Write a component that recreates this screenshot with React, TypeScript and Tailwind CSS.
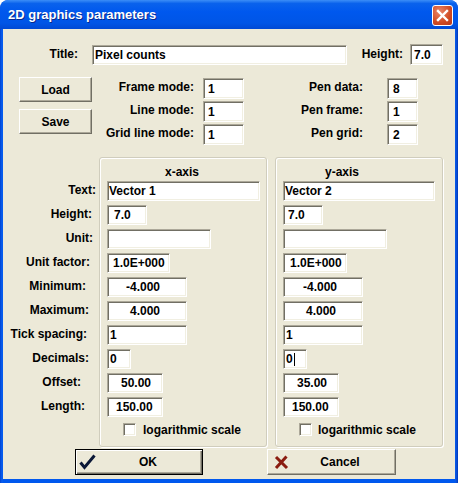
import React from "react";

const inputCls =
  "bg-white border border-t-[#aca899] border-l-[#aca899] border-b-white border-r-white shadow-[inset_1px_1px_0_#716f64,inset_-1px_-1px_0_#f1efe2] flex items-center whitespace-nowrap overflow-hidden";

function Field({ cls, text, cursor }: { cls: string; text: string; cursor?: boolean }) {
  return (
    <div className={inputCls + " " + cls}>
      <span>{text}</span>
      {cursor && <span className="inline-block w-[1px] h-[13px] bg-black ml-[1px]" />}
    </div>
  );
}

function Btn({ label, cls }: { label: string; cls: string }) {
  return (
    <div
      className={
        "bg-[#ece9d8] border border-t-white border-l-white border-b-[#716f64] border-r-[#716f64] shadow-[inset_-1px_-1px_0_#aca899] flex items-center justify-center " +
        cls
      }
    >
      {label}
    </div>
  );
}

const labelsLeft: [string, string][] = [
  ["Text:", "pr-[3px]"],
  ["Height:", "pr-[7px]"],
  ["Unit:", "pr-[6px]"],
  ["Unit factor:", "pr-[9px]"],
  ["Minimum:", "pr-[13px]"],
  ["Maximum:", "pr-[10px]"],
  ["Tick spacing:", "pr-[12px]"],
  ["Decimals:", "pr-[10px]"],
  ["Offset:", "pr-[18px]"],
  ["Length:", "pr-[14px]"],
];

function Group({
  title,
  titleCls,
  fields,
  cbTextCls,
}: {
  title: string;
  titleCls: string;
  fields: { cls: string; text: string; cursor?: boolean }[];
  cbTextCls: string;
}) {
  return (
    <div className="w-[168px] h-[290px] border border-[#d0cdbd] rounded-[3px] shadow-[inset_1px_1px_0_#fff,1px_1px_0_#fff] pt-[8px] pl-[7px] flex flex-col">
      <div className={"h-[13px] leading-[13px] " + titleCls}>{title}</div>
      <div className="mt-[2px] flex flex-col gap-[4px]">
        {fields.map((f, i) => (
          <Field key={i} cls={"h-[20px] " + f.cls} text={f.text} cursor={f.cursor} />
        ))}
      </div>
      <div className="mt-[6px] ml-[16px] flex items-center h-[13px]">
        <div className="w-[13px] h-[13px] bg-white border border-t-[#aca899] border-l-[#aca899] border-b-white border-r-white shadow-[inset_1px_1px_0_#716f64,inset_-1px_-1px_0_#f1efe2]" />
        <span className={cbTextCls}>logarithmic scale</span>
      </div>
    </div>
  );
}

export default function App() {
  return (
    <div className="w-[458px] h-[483px] bg-white font-['Liberation_Sans',Arial,sans-serif] text-[12px] font-bold text-black">
      <div className="w-[458px] h-[483px] rounded-t-[8px] bg-[linear-gradient(90deg,#0042d0_0px,#0a5ff0_2px,#0058ee_3px,#0058ee_455px,#0a55e0_456px,#0036b8_458px)] flex flex-col overflow-hidden">
        {/* title bar */}
        <div className="h-[29px] flex items-center pl-[8px] pr-[5px] bg-[linear-gradient(180deg,#3c8ef7_0%,#0a62ec_12%,#0058ee_40%,#0055e6_80%,#0049d4_100%)] rounded-t-[8px]">
          <span className="text-white text-[13px] leading-[13px] [text-shadow:1px_1px_0_#0a2a8e]">
            2D graphics parameters
          </span>
          <div className="ml-auto mt-[2px] w-[21px] h-[21px] rounded-[3px] border border-white bg-[radial-gradient(circle_at_35%_30%,#e9866a,#d04a22_60%,#b8381a)] flex items-center justify-center">
            <svg width="13" height="13" viewBox="0 0 13 13">
              <path d="M2 2 L11 11 M11 2 L2 11" stroke="white" strokeWidth="2.4" strokeLinecap="square" />
            </svg>
          </div>
        </div>

        {/* client */}
        <div className="mx-[3px] mb-[4px] flex-1 bg-[#ece9d8] flex flex-col">
          {/* row 1 */}
          <div className="mt-[15px] flex items-center h-[21px]">
            <div className="w-[75px] text-right -mt-[2px]">Title:</div>
            <Field cls="ml-[14px] w-[255px] h-[20px] pl-[2px]" text="Pixel counts" />
            <div className="w-[56px] text-right -mt-[2px]">Height:</div>
            <Field cls="ml-[7px] w-[33px] h-[21px] pl-[3px]" text="7.0" />
          </div>

          {/* row 2 */}
          <div className="mt-[12px] flex">
            <div className="ml-[16px] w-[73px] flex flex-col gap-[7px]">
              <Btn label="Load" cls="h-[25px]" />
              <Btn label="Save" cls="h-[25px]" />
            </div>
            <div className="mt-[1px] flex flex-col gap-[2px]">
              {[
                ["Frame mode:", "1"],
                ["Line mode:", "1"],
                ["Grid line mode:", "1"],
              ].map(([l, v]) => (
                <div key={l} className="flex items-center h-[21px]">
                  <div className="w-[102px] text-right -mt-[3px]">{l}</div>
                  <Field cls="ml-[9px] w-[41px] h-[21px] pl-[4px]" text={v} />
                </div>
              ))}
            </div>
            <div className="mt-[1px] flex flex-col gap-[2px]">
              {[
                ["Pen data:", "8"],
                ["Pen frame:", "1"],
                ["Pen grid:", "2"],
              ].map(([l, v]) => (
                <div key={l} className="flex items-center h-[21px]">
                  <div className="w-[119px] text-right -mt-[3px]">{l}</div>
                  <Field cls="ml-[24px] w-[31px] h-[21px] pl-[5px]" text={v} />
                </div>
              ))}
            </div>
          </div>

          {/* row 3: axes */}
          <div className="mt-[12px] flex">
            <div className="w-[96px] pt-[24px] flex flex-col gap-[4px]">
              {labelsLeft.map(([l, p]) => (
                <div key={l} className={"h-[20px] flex items-center justify-end " + p}>
                  <span className="-mt-[2px]">{l}</span>
                </div>
              ))}
            </div>
            <Group
              title="x-axis"
              titleCls="pl-[58px]"
              cbTextCls="ml-[7px]"
              fields={[
                { cls: "w-[153px] pl-[1px]", text: "Vector 1" },
                { cls: "w-[40px] pl-[6px]", text: "7.0" },
                { cls: "w-[104px]", text: "" },
                { cls: "w-[63px] pl-[5px]", text: "1.0E+000" },
                { cls: "w-[80px] pl-[18px]", text: "-4.000" },
                { cls: "w-[80px] pl-[22px]", text: "4.000" },
                { cls: "w-[80px] pl-[2px]", text: "1" },
                { cls: "w-[24px] pl-[2px]", text: "0" },
                { cls: "w-[56px] pl-[13px]", text: "50.00" },
                { cls: "w-[56px] pl-[8px]", text: "150.00" },
              ]}
            />
            <div className="ml-[8px]">
              <Group
                title="y-axis"
                titleCls="pl-[42px]"
                cbTextCls="ml-[6px]"
                fields={[
                  { cls: "w-[152px] pl-[1px]", text: "Vector 2" },
                  { cls: "w-[40px] pl-[4px]", text: "7.0" },
                  { cls: "w-[104px]", text: "" },
                  { cls: "w-[64px] pl-[6px]", text: "1.0E+000" },
                  { cls: "w-[80px] pl-[19px]", text: "-4.000" },
                  { cls: "w-[80px] pl-[22px]", text: "4.000" },
                  { cls: "w-[80px] pl-[2px]", text: "1" },
                  { cls: "w-[24px] pl-[2px]", text: "0", cursor: true },
                  { cls: "w-[56px] pl-[13px]", text: "35.00" },
                  { cls: "w-[56px] pl-[8px]", text: "150.00" },
                ]}
              />
            </div>
          </div>

          {/* buttons */}
          <div className="mt-[2px] ml-[72px] flex">
            <div className="w-[128px] h-[26px] bg-[#ece9d8] border border-black shadow-[inset_1px_1px_0_#fff,inset_-1px_-1px_0_#716f64,inset_-2px_-2px_0_#aca899] flex items-center">
              <svg width="17" height="16" viewBox="0 0 17 16" className="ml-[3px]">
                <path d="M1.5 8.5 L5.5 13.5 L15.5 1.5" fill="none" stroke="#0b1838" strokeWidth="3" strokeLinejoin="miter" />
              </svg>
              <span className="flex-1 text-center pr-[2px]">OK</span>
            </div>
            <div className="ml-[64px] w-[129px] h-[26px] bg-[#ece9d8] border border-t-white border-l-white border-b-[#716f64] border-r-[#716f64] shadow-[inset_-1px_-1px_0_#aca899] flex items-center">
              <svg width="15" height="15" viewBox="0 0 15 15" className="ml-[6px]">
                <path d="M2 2 L13 13 M12.5 1.5 L2 13" fill="none" stroke="#8a1c10" strokeWidth="3" />
              </svg>
              <span className="flex-1 text-center pr-[4px]">Cancel</span>
            </div>
          </div>
        </div>
      </div>
    </div>
  );
}
